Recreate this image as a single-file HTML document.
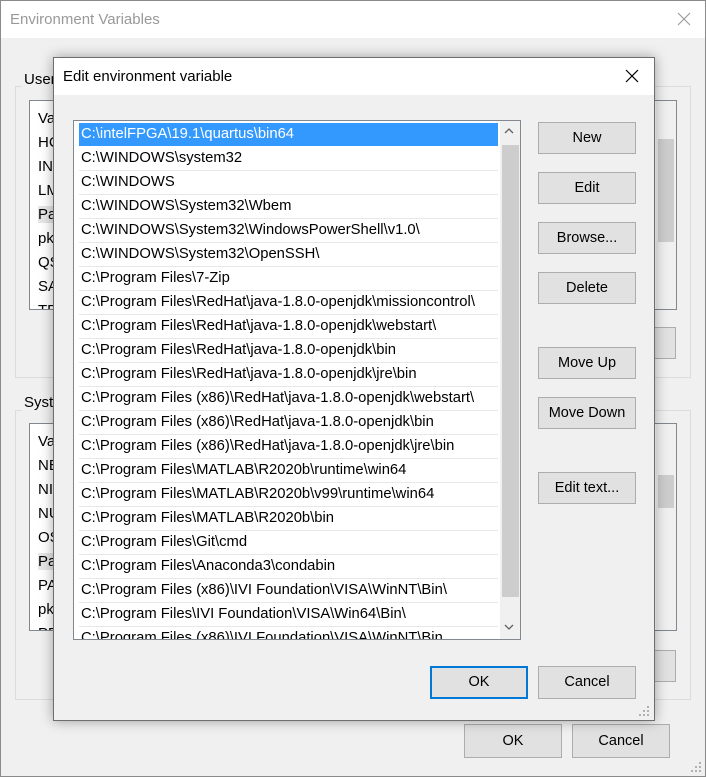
<!DOCTYPE html>
<html><head><style>
*{box-sizing:border-box;margin:0;padding:0}
body{width:706px;height:777px;overflow:hidden;font-family:"Liberation Sans",sans-serif;font-size:14px;color:#000;background:#fff;position:relative}
.abs{position:absolute}
.btn{position:absolute;background:#e1e1e1;border:1px solid #adadad;text-align:center;font-size:14.5px;line-height:30px}
</style></head><body>
<div class="abs" style="left:0;top:0;width:706px;height:777px;border:1px solid #8a8a8a;background:#f0f0f0"></div>
<div class="abs" style="left:1px;top:1px;width:704px;height:37px;background:#fff"></div>
<div class="abs" style="left:10px;top:11px;color:#999;font-size:15px">Environment Variables</div>
<svg class="abs" style="left:677px;top:12px" width="14" height="14"><path d="M1 1L13 13M13 1L1 13" stroke="#999" stroke-width="1.1"/></svg>
<div class="abs" style="left:15px;top:86px;width:676px;height:292px;border:1px solid #dcdcdc"></div>
<div class="abs" style="left:22px;top:71px;background:#f0f0f0;padding:0 2px;font-size:15px">User</div>
<div class="abs" style="left:29px;top:100px;width:648px;height:210px;border:1px solid #828790;background:#fff;overflow:hidden">
<div style="padding:6px 8px;line-height:24px;font-size:15px">Va<br>HC<br>IN<br>LM<br><span style="background:#e5e5e5">Pa</span><br>pk<br>QS<br>SA<br>TE</div></div>
<div class="abs" style="left:656px;top:101px;width:20px;height:208px;background:#f0f0f0"></div>
<div class="abs" style="left:658px;top:139px;width:16px;height:103px;background:#cdcdcd"></div>
<div class="btn" style="left:620px;top:327px;width:56px;height:32px"></div>
<div class="abs" style="left:15px;top:410px;width:676px;height:290px;border:1px solid #dcdcdc"></div>
<div class="abs" style="left:22px;top:394px;background:#f0f0f0;padding:0 2px;font-size:15px">System</div>
<div class="abs" style="left:29px;top:423px;width:648px;height:208px;border:1px solid #828790;background:#fff;overflow:hidden">
<div style="padding:6px 8px;line-height:24px;font-size:15px">Va<br>NE<br>NI<br>NU<br>OS<br><span style="background:#e5e5e5">Pa</span><br>PA<br>pk<br>PR</div></div>
<div class="abs" style="left:656px;top:424px;width:20px;height:206px;background:#f0f0f0"></div>
<div class="abs" style="left:658px;top:475px;width:16px;height:33px;background:#cdcdcd"></div>
<div class="btn" style="left:620px;top:650px;width:56px;height:32px"></div>
<div class="btn" style="left:464px;top:724px;width:98px;height:34px;line-height:32px">OK</div>
<div class="btn" style="left:572px;top:724px;width:98px;height:34px;line-height:32px">Cancel</div>

<div class="abs" style="left:53px;top:57px;width:602px;height:664px;border:1px solid #6e6e6e;background:#f0f0f0;box-shadow:0 0 12px rgba(0,0,0,.35)"></div>
<div class="abs" style="left:54px;top:58px;width:600px;height:37px;background:#fff"></div>
<div class="abs" style="left:63px;top:68px;font-size:15px">Edit environment variable</div>
<svg class="abs" style="left:625px;top:69px" width="14" height="14"><path d="M1 1L13 13M13 1L1 13" stroke="#000" stroke-width="1.2"/></svg>
<div class="abs" style="left:73px;top:120px;width:448px;height:520px;border:1px solid #828790;background:#fff;overflow:hidden">
<div style="position:absolute;left:5px;top:2px;width:419px;line-height:23px;font-size:14.8px;white-space:nowrap">
<div style="background:#3399ff;color:#fff;padding-left:2px;border-bottom:1px solid #fff">C:\intelFPGA\19.1\quartus\bin64</div>
<div style="padding-left:2px;border-bottom:1px solid #e8e8e8">C:\WINDOWS\system32</div>
<div style="padding-left:2px;border-bottom:1px solid #e8e8e8">C:\WINDOWS</div>
<div style="padding-left:2px;border-bottom:1px solid #e8e8e8">C:\WINDOWS\System32\Wbem</div>
<div style="padding-left:2px;border-bottom:1px solid #e8e8e8">C:\WINDOWS\System32\WindowsPowerShell\v1.0\</div>
<div style="padding-left:2px;border-bottom:1px solid #e8e8e8">C:\WINDOWS\System32\OpenSSH\</div>
<div style="padding-left:2px;border-bottom:1px solid #e8e8e8">C:\Program Files\7-Zip</div>
<div style="padding-left:2px;border-bottom:1px solid #e8e8e8">C:\Program Files\RedHat\java-1.8.0-openjdk\missioncontrol\</div>
<div style="padding-left:2px;border-bottom:1px solid #e8e8e8">C:\Program Files\RedHat\java-1.8.0-openjdk\webstart\</div>
<div style="padding-left:2px;border-bottom:1px solid #e8e8e8">C:\Program Files\RedHat\java-1.8.0-openjdk\bin</div>
<div style="padding-left:2px;border-bottom:1px solid #e8e8e8">C:\Program Files\RedHat\java-1.8.0-openjdk\jre\bin</div>
<div style="padding-left:2px;border-bottom:1px solid #e8e8e8">C:\Program Files (x86)\RedHat\java-1.8.0-openjdk\webstart\</div>
<div style="padding-left:2px;border-bottom:1px solid #e8e8e8">C:\Program Files (x86)\RedHat\java-1.8.0-openjdk\bin</div>
<div style="padding-left:2px;border-bottom:1px solid #e8e8e8">C:\Program Files (x86)\RedHat\java-1.8.0-openjdk\jre\bin</div>
<div style="padding-left:2px;border-bottom:1px solid #e8e8e8">C:\Program Files\MATLAB\R2020b\runtime\win64</div>
<div style="padding-left:2px;border-bottom:1px solid #e8e8e8">C:\Program Files\MATLAB\R2020b\v99\runtime\win64</div>
<div style="padding-left:2px;border-bottom:1px solid #e8e8e8">C:\Program Files\MATLAB\R2020b\bin</div>
<div style="padding-left:2px;border-bottom:1px solid #e8e8e8">C:\Program Files\Git\cmd</div>
<div style="padding-left:2px;border-bottom:1px solid #e8e8e8">C:\Program Files\Anaconda3\condabin</div>
<div style="padding-left:2px;border-bottom:1px solid #e8e8e8">C:\Program Files (x86)\IVI Foundation\VISA\WinNT\Bin\</div>
<div style="padding-left:2px;border-bottom:1px solid #e8e8e8">C:\Program Files\IVI Foundation\VISA\Win64\Bin\</div>
<div style="padding-left:2px;border-bottom:1px solid #e8e8e8">C:\Program Files (x86)\IVI Foundation\VISA\WinNT\Bin</div>
</div>
<div style="position:absolute;left:426px;top:0;width:20px;height:518px;background:#f0f0f0"></div>
<div style="position:absolute;left:428px;top:24px;width:17px;height:452px;background:#cdcdcd"></div>
<svg style="position:absolute;left:430px;top:6px" width="10" height="8"><path d="M1 6L5 2L9 6" stroke="#606060" fill="none" stroke-width="1.3"/></svg>
<svg style="position:absolute;left:430px;top:502px" width="10" height="8"><path d="M1 2L5 6L9 2" stroke="#606060" fill="none" stroke-width="1.3"/></svg>
</div>
<div class="btn" style="left:538px;top:122px;width:98px;height:32px">New</div>
<div class="btn" style="left:538px;top:172px;width:98px;height:32px">Edit</div>
<div class="btn" style="left:538px;top:222px;width:98px;height:32px">Browse...</div>
<div class="btn" style="left:538px;top:272px;width:98px;height:32px">Delete</div>
<div class="btn" style="left:538px;top:347px;width:98px;height:32px">Move Up</div>
<div class="btn" style="left:538px;top:397px;width:98px;height:32px">Move Down</div>
<div class="btn" style="left:538px;top:472px;width:98px;height:32px">Edit text...</div>
<div class="btn" style="left:430px;top:666px;width:98px;height:33px;border:2px solid #0078d7;line-height:29px">OK</div>
<div class="btn" style="left:538px;top:666px;width:98px;height:33px">Cancel</div>
<svg class="abs" style="left:639px;top:706px" width="12" height="12" fill="#b0b0b0"><rect x="8" y="0" width="2" height="2"/><rect x="4" y="4" width="2" height="2"/><rect x="8" y="4" width="2" height="2"/><rect x="0" y="8" width="2" height="2"/><rect x="4" y="8" width="2" height="2"/><rect x="8" y="8" width="2" height="2"/></svg>
<svg class="abs" style="left:691px;top:762px" width="12" height="12" fill="#b0b0b0"><rect x="8" y="0" width="2" height="2"/><rect x="4" y="4" width="2" height="2"/><rect x="8" y="4" width="2" height="2"/><rect x="0" y="8" width="2" height="2"/><rect x="4" y="8" width="2" height="2"/><rect x="8" y="8" width="2" height="2"/></svg>
</body></html>
